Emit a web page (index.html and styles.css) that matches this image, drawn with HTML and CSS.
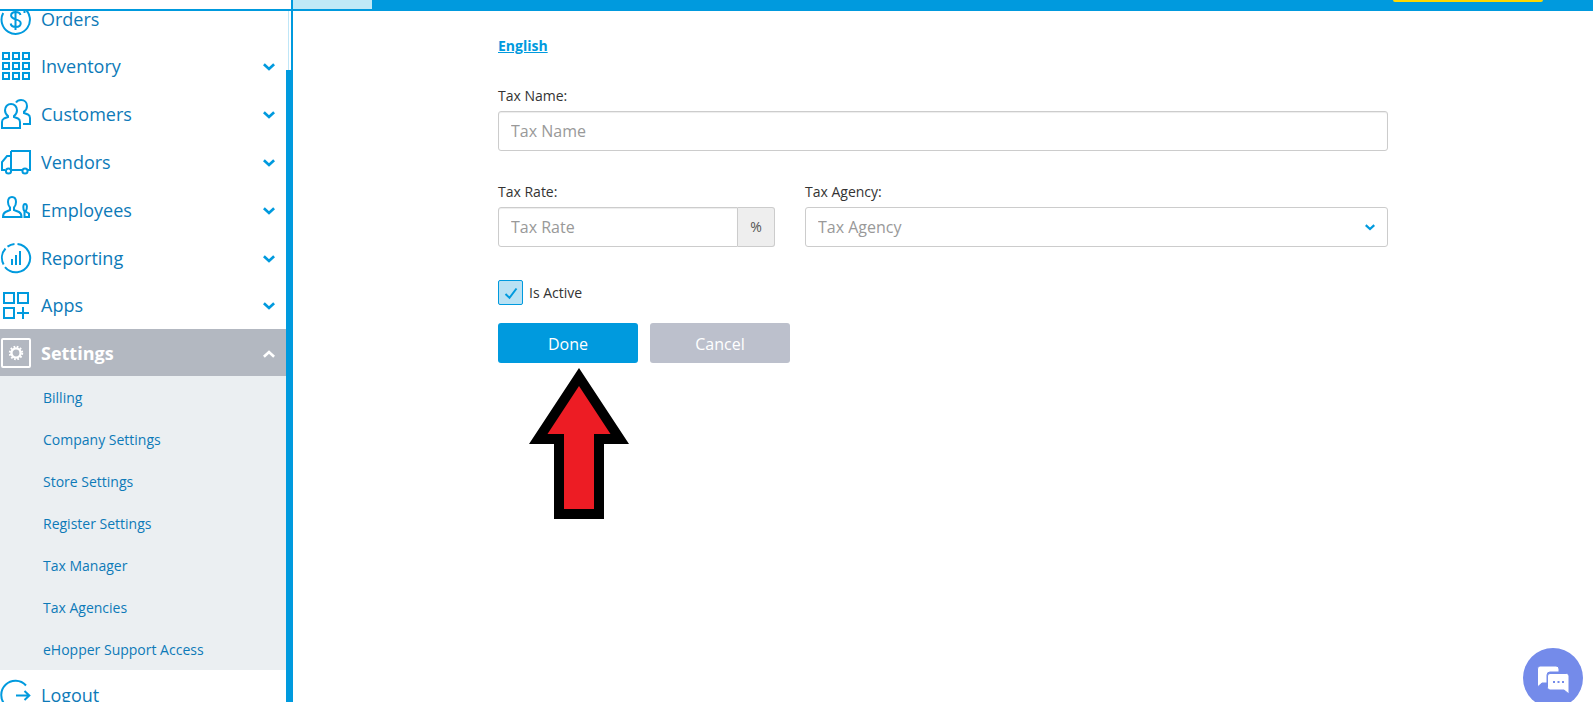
FILE: index.html
```html
<!DOCTYPE html>
<html lang="en">
<head>
<meta charset="utf-8">
<title>Tax Manager</title>
<link rel="stylesheet" href="styles.css">
</head>
<body>
<svg class="defs" aria-hidden="true">
  <symbol id="chevron" viewBox="0 0 12 8"><path d="M.9 1.200 6 5.900l5.100-4.700" fill="none" stroke="currentColor" stroke-width="2.700"/></symbol>
</svg>
<div class="app">
  <header class="topbar">
    <div class="brand"></div>
    <div class="topbar-main">
      <div class="tab"></div>
      <div class="promo"></div>
    </div>
  </header>
  <div class="body">
    <nav class="sidebar">
      <ul class="menu">
        <li><a class="item item-first" href="#">
          <svg class="icon" viewBox="0 0 32 32"><path d="M3.200 10A14.200 14.200 0 1 0 24.500 5.500M24.500 10V4.500M15.500 6v21M20.500 12c-.5-2-2.200-3-4.800-3-2.800 0-4.600 1.400-4.600 3.600 0 5 9.600 2.600 9.600 7.700 0 2.300-2 3.700-5 3.700-2.700 0-4.600-1.200-5-3.500"/></svg>
          <span class="label">Orders</span></a></li>
        <li><a class="item" href="#">
          <svg class="icon" viewBox="0 0 32 32"><path d="M3 3h6v6H3zM13 3h6v6h-6zM23 3h6v6h-6zM3 13h6v6H3zM13 13h6v6h-6zM23 13h6v6h-6zM3 23h6v6H3zM13 23h6v6h-6zM23 23h6v6h-6z"/></svg>
          <span class="label">Inventory</span><svg class="chev"><use href="#chevron"/></svg></a></li>
        <li><a class="item" href="#">
          <svg class="icon" viewBox="0 0 32 32"><path d="M8 18c-2-1.500-3-3.300-3-5.700C5 8.700 7.600 6 11 6s6 2.700 6 6.300c0 2.400-1 4.200-3 5.700v1l4 1.500c1.600.8 2 2 2 3.500v6H2v-6c0-1.500.6-2.700 2-3.500l4-1.500zM16 4.500C17 2.900 18.700 2 21 2c3.500 0 6 2.500 6 6 0 2.600-1 4.400-3 5.700V15l4 1.500c1.600.7 2 1.800 2 3.500v6h-7"/></svg>
          <span class="label">Customers</span><svg class="chev"><use href="#chevron"/></svg></a></li>
        <li><a class="item" href="#">
          <svg class="icon" viewBox="0 0 32 32"><path d="M5 24H2v-8l5-6h4M11 5h19v19h-2M11 5v19M11 24h11"/><circle cx="8.500" cy="25" r="2.600"/><circle cx="25" cy="25" r="2.600"/></svg>
          <span class="label">Vendors</span><svg class="chev"><use href="#chevron"/></svg></a></li>
        <li><a class="item" href="#">
          <svg class="icon" viewBox="0 0 32 32"><path d="M10 13.500C8.600 12 8 10.500 8 8c0-3 1.600-5 4-5s4 2 4 5c0 2.500-.6 4-2 5.500V16l5 2c2 1 2.500 2.500 2.500 5h-18.500c0-2.500.6-4 2.500-5l4.500-2zM24.500 17.500c-1.500-2-1.800-7.500.5-7.500s2.600 4 .6 7.500l3.400 2V23h-4.500z"/></svg>
          <span class="label">Employees</span><svg class="chev"><use href="#chevron"/></svg></a></li>
        <li><a class="item item-short" href="#">
          <svg class="icon" viewBox="0 0 32 32"><path d="M17.500 2A14.200 14.200 0 1 1 5 25.200M3.600 22.500A14.200 14.200 0 0 1 5.500 6.500M7.500 4.600A14 14 0 0 1 14.500 2M12 17v6M16 13v10M20 9v14"/></svg>
          <span class="label">Reporting</span><svg class="chev"><use href="#chevron"/></svg></a></li>
        <li><a class="item" href="#">
          <svg class="icon" viewBox="0 0 32 32"><path d="M4 4h10v10H4zM18 4h10v10H18zM4 19h10v10H4zM23 18v12M17 24h12"/></svg>
          <span class="label">Apps</span><svg class="chev"><use href="#chevron"/></svg></a></li>
        <li class="open"><a class="item item-open" href="#">
          <svg class="icon" viewBox="0 0 32 32"><rect x="2" y="2" width="28" height="28" rx="1"/><circle cx="16" cy="16" r="4.600" stroke-width="2.400"/><circle cx="16" cy="16" r="6.200" stroke-width="2" stroke-dasharray="1.700 1.546"/></svg>
          <span class="label">Settings</span><svg class="chev chev-up"><use href="#chevron"/></svg></a>
          <ul class="submenu">
            <li><a href="#">Billing</a></li>
            <li><a href="#">Company Settings</a></li>
            <li><a href="#">Store Settings</a></li>
            <li><a href="#">Register Settings</a></li>
            <li><a href="#">Tax Manager</a></li>
            <li><a href="#">Tax Agencies</a></li>
            <li><a href="#">eHopper Support Access</a></li>
          </ul></li>
        <li><a class="item item-short" href="#">
          <svg class="icon" viewBox="0 0 32 32"><path d="M26 6.500A14.200 14.200 0 1 0 26 25.500M16 16.500h13M24.500 12l4.800 4.500-4.800 4.500"/></svg>
          <span class="label">Logout</span></a></li>
      </ul>
      <div class="scroll"><div class="thumb"></div></div>
    </nav>
    <main class="content">
      <form class="form">
        <a class="lang" href="#">English</a>
        <div class="field">
          <label for="name">Tax Name:</label>
          <input class="control" id="name" type="text" placeholder="Tax Name">
        </div>
        <div class="row">
          <div class="field">
            <label for="rate">Tax Rate:</label>
            <div class="group">
              <input class="control" id="rate" type="text" placeholder="Tax Rate">
              <span class="addon">%</span>
            </div>
          </div>
          <div class="field">
            <label for="agency">Tax Agency:</label>
            <div class="select">
              <select class="control" id="agency"><option>Tax Agency</option></select>
              <svg class="select-chev"><use href="#chevron"/></svg>
            </div>
          </div>
        </div>
        <label class="check">
          <span class="box"><input type="checkbox" checked><svg viewBox="0 0 25 25"><path d="M7.500 14l4 3.800L18.500 8.500"/></svg></span>
          Is Active
        </label>
        <div class="actions">
          <div class="target">
            <button class="btn btn-primary" type="button">Done</button>
            <svg class="pointer" viewBox="0 0 100 152"><path d="M50 0 100 76H75v75H25V76H0z"/><path class="pointer-fill" d="M50 18 81.500 66H65v75H35V66H18.500z"/></svg>
          </div>
          <button class="btn btn-muted" type="button">Cancel</button>
        </div>
      </form>
    </main>
  </div>
  <button class="chat" type="button" aria-label="Chat">
    <svg viewBox="0 0 60 60"><path d="M17 18h16q3 0 3 3v3H27q-3 0-3 3v8h-5l-4.500 4V21q0-3 2.500-3z"/><path d="M27 25.500h16.500q2.500 0 2.500 2.500v18l-5-4H27q-2.500 0-2.500-2.500V28q0-2.500 2.500-2.500z"/><path class="dots" d="M30 33h2v2h-2zM34.500 33h2v2h-2zM39 33h2v2h-2z"/></svg>
  </button>
</div>
</body>
</html>
```
FILE: styles.css
```css
* { box-sizing: border-box; }
body {
  margin: 0;
  font-family: "Open Sans", "Noto Sans", sans-serif;
  font-size: 14px;
  color: #333;
  background: #fff;
}
ul { margin: 0; padding: 0; list-style: none; }
a { text-decoration: none; }
.defs { display: none; }
.app { display: flex; flex-direction: column; height: 100vh; overflow: hidden; }

.topbar { display: flex; flex: none; height: 11px; border-bottom: 2px solid #009ade; }
.brand { width: 293px; border-right: 2px solid #009ade; }
.topbar-main { flex: 1; display: flex; justify-content: space-between; background: #009ade; }
.tab { width: 79px; background: #bfe9f7; }
.promo { width: 150px; height: 2px; margin-right: 50px; background: #ffd800; border-radius: 0 0 3px 3px; }

.body { flex: 1; display: flex; min-height: 0; }
.sidebar { display: flex; flex: none; width: 293px; overflow: hidden; }
.menu { flex: 1; margin-top: -16px; }
.item {
  display: flex;
  align-items: center;
  height: 48px;
  padding: 2px 11px 0 0;
  color: #0d7ab8;
  font-size: 18px;
}
.item-short { height: 47px; }
.icon { width: 32px; height: 32px; margin-right: 9px; fill: none; stroke: #009ade; stroke-width: 2; }
.label { flex: 1; }
.chev { width: 12px; height: 8px; margin-top: 2px; color: #009ade; }
.chev-up { transform: rotate(180deg); color: #fff; }
.item-first { height: 46px; }
.open { padding-top: 1px; }
.item-open { height: 47px; padding-top: 0; background: #b3b8c1; color: #fff; font-weight: 700; }
.item-open .icon { stroke: #fff; }
.submenu { background: #ebeff2; }
.submenu a { display: block; height: 42px; padding: 2px 0 0 43px; line-height: 40px; color: #0d7ab8; }
.scroll { width: 7px; padding-top: 59px; background: linear-gradient(90deg, #fff 2px, #bfe6f7 2px 3px, #fff 3px 5px, #009ade 5px); }
.thumb { height: 100%; background: #009ade; }

.content { flex: 1; padding: 25px 30px 0; }
.form { max-width: 890px; margin: 0 auto; }
.lang { display: inline-block; line-height: 20px; margin-bottom: 30px; color: #009ade; font-weight: 700; text-decoration: underline; }
.field { display: flex; flex-direction: column; gap: 5px; margin-bottom: 31px; }
.field label { line-height: 20px; }
.control {
  width: 100%;
  height: 40px;
  padding: 0 12px;
  border: 1px solid #ccc;
  border-radius: 3px;
  background: #fff;
  font: inherit;
  font-size: 16px;
  color: #999;
  box-shadow: inset 0 1px 1px rgba(0, 0, 0, .075);
}
.control::placeholder { color: #999; opacity: 1; }
.row { display: grid; grid-template-columns: 277fr 583fr; gap: 30px; }
.group { display: flex; }
.group .control { flex: 1; min-width: 0; border-radius: 3px 0 0 3px; }
.addon {
  width: 37px;
  line-height: 38px;
  text-align: center;
  color: #555;
  background: #eee;
  border: 1px solid #ccc;
  border-left: 0;
  border-radius: 0 3px 3px 0;
}
.select { display: grid; align-items: center; }
.select > * { grid-area: 1 / 1; }
.select .control { appearance: none; box-shadow: none; }
.select-chev { width: 10px; height: 7px; margin-right: 13px; justify-self: end; color: #009ade; pointer-events: none; }
.check { display: flex; align-items: center; gap: 6px; margin: 2px 0 18px; }
.box { display: grid; width: 25px; height: 25px; }
.box > * { grid-area: 1 / 1; }
.box input { appearance: none; margin: 0; border: 1px solid #009ade; border-radius: 2px; background: #b9e1f3; }
.box svg { fill: none; stroke: #009ade; stroke-width: 2; }
.actions { display: flex; gap: 12px; }
.target { position: relative; }
.btn { width: 140px; height: 40px; padding: 2px 0 0; border: 0; border-radius: 3px; color: #fff; font: inherit; font-size: 16px; }
.btn-primary { background: #009ade; }
.btn-muted { background: #bcc0cc; }
.pointer { position: absolute; top: 45px; left: 31px; width: 100px; height: 152px; }
.pointer-fill { fill: #ed1c24; }

.chat { position: fixed; right: 10px; bottom: -6px; width: 60px; height: 60px; padding: 0; border: 0; border-radius: 50%; background: #748bea; }
.chat svg { display: block; fill: #fff; stroke: #748bea; stroke-width: 1; }
.chat .dots { fill: #748bea; stroke: none; }
```
